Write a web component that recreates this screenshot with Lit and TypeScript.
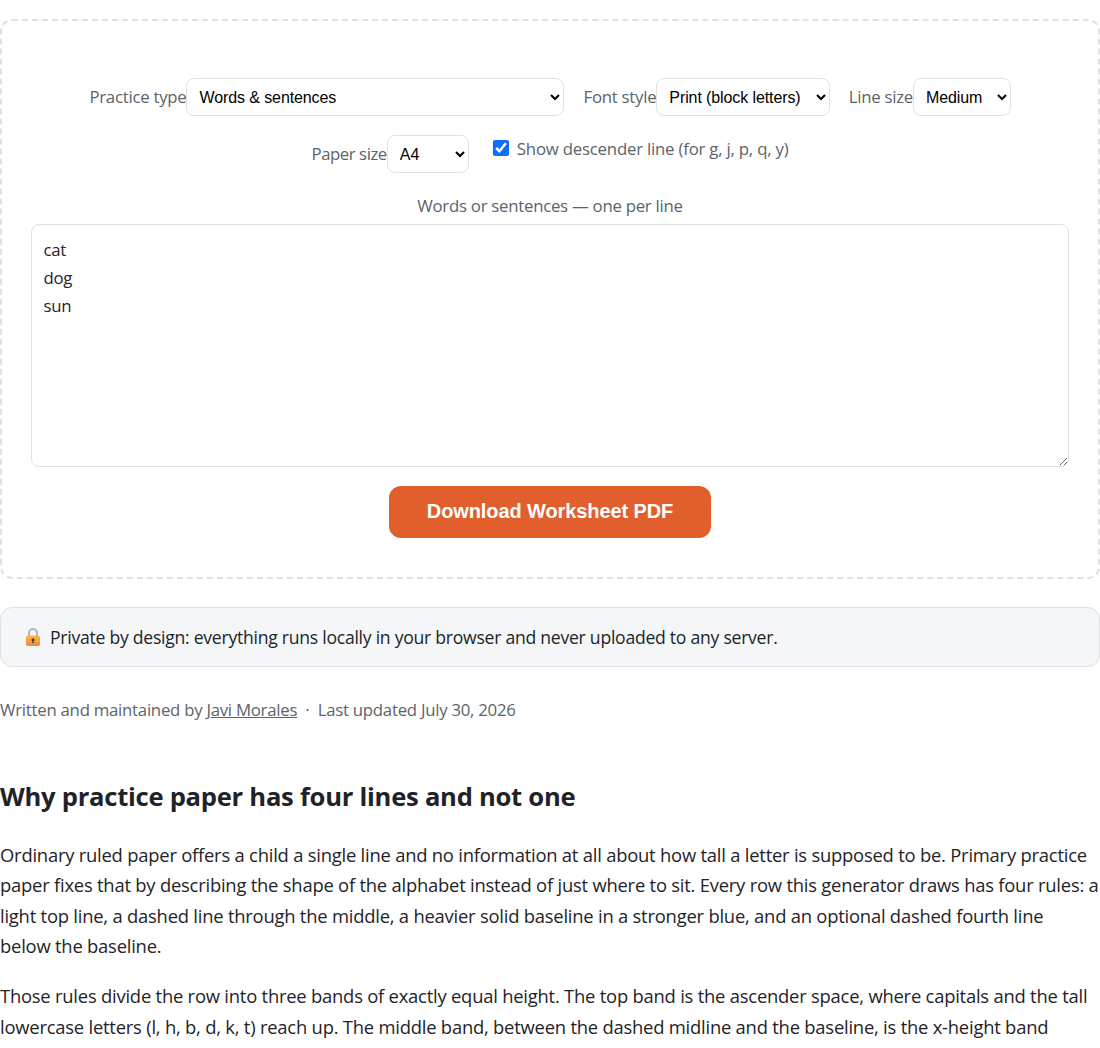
import { LitElement, html, css } from "lit";
import { customElement } from "lit/decorators.js";

@customElement("app-root")
export class AppRoot extends LitElement {
  static styles = css`
    :host { display: block; font-family: "Open Sans", "Noto Sans", sans-serif; font-size: 18px; line-height: 30.6px; color: #1f2328; background: #fff; height: 1048px; overflow: hidden; letter-spacing: -0.26px; }
    .tool { box-sizing: border-box; margin-top: 19px; height: 560px; border: 2px dashed #dee2e6; border-radius: 12px; padding: 57px 29px 0; display: flex; flex-direction: column; align-items: center; }
    .controls { display: flex; flex-wrap: wrap; justify-content: center; align-items: center; gap: 19px; align-self: stretch; }
    .field { display: flex; align-items: center; color: #5c636a; font-size: 16.8px; line-height: 24px; }
    .paper { letter-spacing: -0.46px; }
    select { font-family: "Liberation Sans", Arial, sans-serif; font-size: 16px; height: 38px; background: #fff; color: #000; border: 1px solid #dee2e6; border-radius: 8px; padding: 0 8px; letter-spacing: -0.1px; }
    .w-type { width: 378px; }
    .w-font { width: 173.4px; }
    .w-line { width: 97.6px; }
    .w-paper { width: 82px; }
    .check { align-self: flex-start; align-items: flex-start; gap: 8px; line-height: 28px; height: 38px; padding-left: 5px; letter-spacing: -0.21px; }
    .check input { margin: 5px 0 0; width: 16px; height: 16px; accent-color: #0d6efd; }
    .ta-label { margin-top: 18px; color: #5c636a; font-size: 16.8px; line-height: 30px; margin-bottom: 3px; }
    textarea { box-sizing: border-box; width: 100%; height: 243px; border: 1px solid #dee2e6; border-radius: 8px; padding: 11px 11.5px; font: inherit; font-size: 16.8px; line-height: 28px; letter-spacing: -0.26px; color: #212529; background: #fff; display: block; outline: none; }
    .btn { margin-top: 19px; width: 322px; height: 52px; padding: 0 0 2px; background: #e05f2c; color: #fff; border: 0; border-radius: 12px; font-family: "Liberation Sans", Arial, sans-serif; font-weight: 700; font-size: 20px; letter-spacing: -0.1px; }
    .privacy { box-sizing: border-box; margin-top: 28px; height: 60px; background: #f4f6f8; border: 1px solid #dee2e6; border-radius: 12px; padding: 0 23px; display: flex; align-items: center; gap: 8px; font-size: 17.6px; color: #212529; }
    .privacy svg { flex: none; }
    .meta { margin: 28px 0 0; font-size: 16.8px; line-height: 30px; color: #5c636a; }
    .meta a { color: inherit; text-decoration: underline; }
    h2 { margin: 54px 0 0; font-size: 25.6px; line-height: 36px; font-weight: 700; color: #1f2328; }
    p { margin: 0; }
    .body { margin-top: 25px; display: flex; flex-direction: column; gap: 19.5px; font-size: 18.4px; line-height: 30.4px; letter-spacing: -0.22px; }
  `;
  render() {
    return html`
      <section class="tool">
        <div class="controls">
          <label class="field">Practice type<select class="w-type"><option>Words &amp; sentences</option></select></label>
          <label class="field">Font style<select class="w-font"><option>Print (block letters)</option></select></label>
          <label class="field">Line size<select class="w-line"><option>Medium</option></select></label>
          <label class="field paper">Paper size<select class="w-paper"><option>A4</option></select></label>
          <label class="field check"><input type="checkbox" checked />Show descender line (for g, j, p, q, y)</label>
        </div>
        <label class="ta-label">Words or sentences — one per line</label>
        <textarea .value=${"cat\ndog\nsun"}></textarea>
        <button class="btn">Download Worksheet PDF</button>
      </section>
      <div class="privacy">
        <svg width="18" height="20" viewBox="0 0 18 20">
          <defs>
            <linearGradient id="lockBody" x1="0" y1="0" x2="0" y2="1">
              <stop offset="0" stop-color="#fbb84a" />
              <stop offset="1" stop-color="#ef8a3e" />
            </linearGradient>
          </defs>
          <path d="M5 9V6a4 4 0 0 1 8 0v3" fill="none" stroke="#b4b6ba" stroke-width="2"/>
          <rect x="2" y="8.5" width="14" height="10.5" rx="1.8" fill="url(#lockBody)"/>
          <circle cx="9" cy="12.8" r="1.5" fill="#4a3a2a"/><rect x="8.3" y="13" width="1.4" height="3.2" fill="#4a3a2a"/>
        </svg>
        <span>Private by design: everything runs locally in your browser and never uploaded to any server.</span>
      </div>
      <p class="meta">Written and maintained by <a href="#">Javi Morales</a> &nbsp;·&nbsp; Last updated July 30, 2026</p>
      <h2>Why practice paper has four lines and not one</h2>
      <div class="body">
        <p>Ordinary ruled paper offers a child a single line and no information at all about how tall a letter is supposed to be. Primary practice paper fixes that by describing the shape of the alphabet instead of just where to sit. Every row this generator draws has four rules: a light top line, a dashed line through the middle, a heavier solid baseline in a stronger blue, and an optional dashed fourth line<br />below the baseline.</p>
        <p>Those rules divide the row into three bands of exactly equal height. The top band is the ascender space, where capitals and the tall lowercase letters (l, h, b, d, k, t) reach up. The middle band, between the dashed midline and the baseline, is the x-height band</p>
      </div>
    `;
  }
}
